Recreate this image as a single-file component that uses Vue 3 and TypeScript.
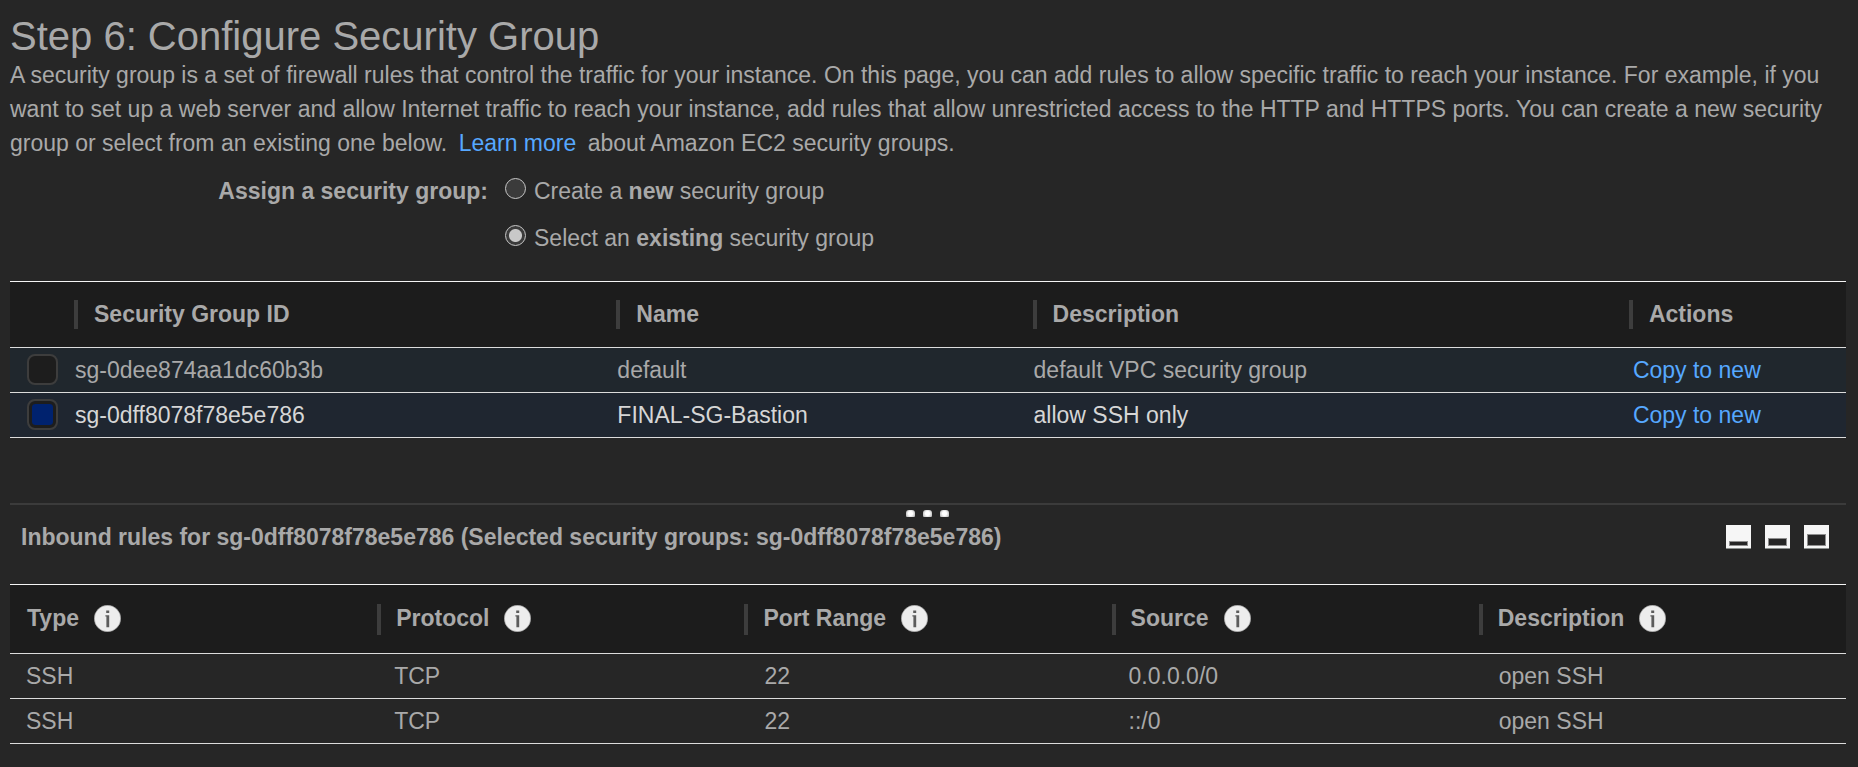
<script setup lang="ts">
import { ref } from 'vue'

interface SecurityGroup {
  id: string
  name: string
  description: string
}

interface Rule {
  type: string
  protocol: string
  port: string
  source: string
  description: string
}

const mode = ref<'new' | 'existing'>('existing')
const selected = ref<string[]>(['sg-0dff8078f78e5e786'])

const groups: SecurityGroup[] = [
  { id: 'sg-0dee874aa1dc60b3b', name: 'default', description: 'default VPC security group' },
  { id: 'sg-0dff8078f78e5e786', name: 'FINAL-SG-Bastion', description: 'allow SSH only' },
]

const ruleColumns = ['Type', 'Protocol', 'Port Range', 'Source', 'Description']

const rules: Rule[] = [
  { type: 'SSH', protocol: 'TCP', port: '22', source: '0.0.0.0/0', description: 'open SSH' },
  { type: 'SSH', protocol: 'TCP', port: '22', source: '::/0', description: 'open SSH' },
]

const paneSizes = [
  { label: 'Small pane', y: 17, height: 3 },
  { label: 'Medium pane', y: 14, height: 6 },
  { label: 'Large pane', y: 10, height: 10 },
]
</script>

<template>
  <main class="page">
    <h1>Step 6: Configure Security Group</h1>
    <p class="intro">
      A security group is a set of firewall rules that control the traffic for your instance. On this page, you can add
      rules to allow specific traffic to reach your instance. For example, if you want to set up a web server and allow
      Internet traffic to reach your instance, add rules that allow unrestricted access to the HTTP and HTTPS ports. You
      can create a new security group or select from an existing one below.
      <a class="learn" href="#">Learn more</a> about Amazon EC2 security groups.
    </p>

    <div class="assign" role="radiogroup" aria-labelledby="assign-label">
      <div id="assign-label" class="assign-label">Assign a security group:</div>
      <div class="options">
        <label class="option">
          <input v-model="mode" type="radio" name="mode" value="new" />
          <span>Create a <b>new</b> security group</span>
        </label>
        <label class="option">
          <input v-model="mode" type="radio" name="mode" value="existing" />
          <span>Select an <b>existing</b> security group</span>
        </label>
      </div>
    </div>

    <table class="groups">
      <colgroup>
        <col class="c-check" />
        <col class="c-id" />
        <col class="c-name" />
        <col class="c-desc" />
        <col />
      </colgroup>
      <thead>
        <tr>
          <th></th>
          <th scope="col"><div class="head">Security Group ID</div></th>
          <th scope="col"><div class="head">Name</div></th>
          <th scope="col"><div class="head">Description</div></th>
          <th scope="col"><div class="head">Actions</div></th>
        </tr>
      </thead>
      <tbody>
        <tr v-for="g in groups" :key="g.id" :class="{ chosen: selected.includes(g.id) }">
          <td class="check"><input v-model="selected" type="checkbox" :value="g.id" :aria-label="g.id" /></td>
          <td>{{ g.id }}</td>
          <td>{{ g.name }}</td>
          <td>{{ g.description }}</td>
          <td class="action"><a href="#">Copy to new</a></td>
        </tr>
      </tbody>
    </table>

    <section class="pane">
      <div class="grip"><i></i><i></i><i></i></div>
      <header class="pane-head">
        <h2>Inbound rules for sg-0dff8078f78e5e786 (Selected security groups: sg-0dff8078f78e5e786)</h2>
        <div class="sizes">
          <button v-for="s in paneSizes" :key="s.label" type="button" :aria-label="s.label">
            <svg width="25" height="24" viewBox="0 0 25 24">
              <rect width="25" height="24" fill="#f6f6f6" />
              <rect y="23" width="25" height="1" fill="#8b8f8d" />
              <rect x="3.5" :y="s.y - 0.5" width="18" :height="s.height + 1" fill="#262626" stroke="#8f8f8f" />
            </svg>
          </button>
        </div>
      </header>

      <table class="rules">
        <thead>
          <tr>
            <th v-for="c in ruleColumns" :key="c" scope="col">
              <div class="head">
                {{ c }}
                <svg class="info" width="27" height="27" viewBox="0 0 27 27">
                  <circle cx="13.5" cy="13.5" r="13.2" fill="#ededed" stroke="#a0a0a0" stroke-width="0.6" />
                  <rect x="12.2" y="5.5" width="3" height="2.5" fill="#5c5c5c" />
                  <path d="M11.4 10.2h3.8v12h-2.8v-10.8h-1z" fill="#5c5c5c" />
                </svg>
              </div>
            </th>
          </tr>
        </thead>
        <tbody>
          <tr v-for="r in rules" :key="r.source">
            <td>{{ r.type }}</td>
            <td>{{ r.protocol }}</td>
            <td class="port">{{ r.port }}</td>
            <td>{{ r.source }}</td>
            <td class="note">{{ r.description }}</td>
          </tr>
        </tbody>
      </table>
    </section>
  </main>
</template>

<style>
html,
body {
  margin: 0;
  background: #262626;
}
</style>

<style scoped>
.page {
  padding: 14px 12px 22px 10px;
  color: #a9a9a9;
  font-family: 'Liberation Sans', Arial, sans-serif;
  font-size: 23px;
  line-height: 34px;
}

h1 {
  margin: 0;
  font-size: 40px;
  line-height: 44px;
  font-weight: 400;
}

.intro {
  margin: 0;
}

a {
  color: #56a8ff;
  text-decoration: none;
}

.learn {
  margin: 0 5px;
}

.assign {
  display: flex;
  gap: 17px;
  margin: 8px 0 19px;
  line-height: 47px;
}

.assign-label {
  width: 478px;
  text-align: right;
  font-weight: 700;
}

.option {
  display: flex;
  align-items: center;
  gap: 8px;
}

input {
  appearance: none;
  box-sizing: border-box;
  margin: 0;
}

.option input {
  width: 21px;
  height: 21px;
  margin-bottom: 6px;
  border: 1px solid #c8c8c8;
  border-radius: 50%;
  background: #3b3b3b;
}

.option input:checked {
  background: radial-gradient(circle, #c8c8c8 6px, #3b3b3b 7px);
}

table {
  width: 100%;
  table-layout: fixed;
  border-collapse: collapse;
}

th,
td {
  padding: 0;
  text-align: left;
  white-space: nowrap;
}

thead tr {
  border-top: 1px solid #f4f4f4;
  background: #1c1c1c;
}

tbody tr {
  border-top: 1px solid #dcdcdc;
  border-bottom: 1px solid #dcdcdc;
}

td {
  height: 44px;
  line-height: 34px;
}

.head {
  display: flex;
  box-sizing: border-box;
  align-items: center;
  gap: 15px;
  height: 29px;
  padding: 0 0 2px 16px;
  border-left: 4px solid #3d3d3d;
}

.groups .c-check {
  width: 64px;
}

.groups .c-id {
  width: 29.54%;
}

.groups .c-name {
  width: 22.67%;
}

.groups .c-desc {
  width: 32.48%;
}

.groups th {
  height: 65px;
}

.groups tbody tr {
  background: #20272d;
}

.groups tbody tr.chosen {
  background: #1f2630;
  color: #d6d6d6;
}

.groups td {
  padding-left: 1px;
}

.groups td.check {
  padding-left: 17px;
}

.groups td.action {
  padding-left: 4px;
}

.check input {
  display: block;
  width: 31px;
  height: 31px;
  margin-bottom: 2px;
  border: 2px solid #3d3d3d;
  border-radius: 8px;
  background: #1d1d1d;
}

.check input:checked {
  padding: 3px;
  background: #00226e content-box;
  box-shadow: inset 0 0 0 3px #1d1d1d;
}

.pane {
  position: relative;
  margin-top: 65px;
  border-top: 2px solid #3b3b3b;
}

.grip {
  position: absolute;
  top: 5px;
  left: 0;
  right: 2px;
  display: flex;
  justify-content: center;
  gap: 8px;
}

.grip i {
  width: 9px;
  height: 7px;
  border-radius: 3px 3px 1px 1px;
  background: radial-gradient(circle, #ffffff 2px, #a0a0a0 6px);
}

.pane-head {
  display: flex;
  align-items: center;
  justify-content: space-between;
  padding: 15px 17px 30px 11px;
}

h2 {
  margin: 0;
  font-size: 23px;
  line-height: 34px;
}

.sizes {
  display: flex;
  gap: 14px;
}

button {
  display: block;
  padding: 0;
  border: 0;
  background: none;
}

svg {
  display: block;
}

.rules th {
  height: 68px;
}

.rules .head {
  height: 31px;
  padding-left: 15px;
}

.rules th:first-child .head {
  padding-left: 17px;
  border-left: 0;
}

.rules td {
  padding-left: 17px;
}

.rules td:first-child {
  padding-left: 16px;
}

.rules td.port,
.rules td.note {
  padding-left: 20px;
}
</style>
